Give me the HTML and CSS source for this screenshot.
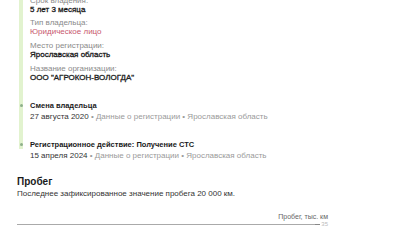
FILE: index.html
```html
<!DOCTYPE html>
<html lang="ru">
  <head>
    <meta charset="UTF-8" />
    <meta name="viewport" content="width=device-width, initial-scale=1.0" />
    <title>История владения</title>
    <link rel="stylesheet" href="styles.css">
  </head>
  <body>
    <main>
      <div class="timeline">
        <div class="owner">
          <div class="field">
            <div class="label">Срок владения:</div>
            <div class="value">5 лет 3 месяца</div>
          </div>
          <div class="field">
            <div class="label">Тип владельца:</div>
            <div class="value value-red">Юридическое лицо</div>
          </div>
          <div class="field">
            <div class="label">Место регистрации:</div>
            <div class="value">Ярославская область</div>
          </div>
          <div class="field">
            <div class="label">Название организации:</div>
            <div class="value">ООО "АГРОКОН-ВОЛОГДА"</div>
          </div>
        </div>

        <div class="event">
          <span class="dot"></span>
          <div class="event-title">Смена владельца</div>
          <div class="event-meta">27 августа 2020 <span class="muted">&bull; Данные о регистрации &bull; Ярославская область</span></div>
        </div>

        <div class="event">
          <span class="dot"></span>
          <div class="event-title">Регистрационное действие: Получение СТС</div>
          <div class="event-meta">15 апреля 2024 <span class="muted">&bull; Данные о регистрации &bull; Ярославская область</span></div>
        </div>
      </div>

      <section class="mileage">
        <h2>Пробег</h2>
        <p>Последнее зафиксированное значение пробега 20&nbsp;000&nbsp;км.</p>
        <div class="chart">
          <div class="chart-caption">Пробег, тыс. км</div>
          <div class="chart-row">
            <div class="chart-axis"></div>
            <span class="tick">35</span>
          </div>
        </div>
      </section>
    </main>
  </body>
</html>
```

FILE: styles.css
```css
* {
  box-sizing: border-box;
}

body {
  font-family: "Liberation Sans", Arial, sans-serif;
  margin: 0;
  padding: 0;
  background-color: #fff;
  color: #222;
  font-size: 8px;
  overflow: hidden;
}

main {
  padding: 0 17px;
  margin-top: -4px;
}

.timeline {
  position: relative;
  padding-left: 12px;
  margin-left: 1px;
}

.timeline::before {
  content: "";
  position: absolute;
  left: 1px;
  top: 0;
  height: 153px;
  width: 4px;
  background-color: #e2f3cf;
}

.field {
  margin-bottom: 5px;
  line-height: 9px;
}

.field:first-child {
  margin-bottom: 4px;
}

.label {
  color: #8a8a8a;
}

.value {
  color: #1a1a1a;
  -webkit-text-stroke: 0.3px #1a1a1a;
}

.value-red {
  color: #c8586e;
  -webkit-text-stroke: 0;
}

.owner {
  padding-bottom: 14px;
}

.event {
  position: relative;
  margin-bottom: 18px;
}

.event:last-child {
  margin-bottom: 0;
}

.dot {
  position: absolute;
  left: -10px;
  top: 3px;
  width: 3px;
  height: 3px;
  border-radius: 50%;
  background-color: #8eb08a;
}

.event-title {
  font-size: 7.5px;
  font-weight: bold;
  line-height: 10px;
  color: #1a1a1a;
}

.event-meta {
  margin-top: 1px;
  line-height: 10px;
  color: #333;
}

.muted {
  color: #9a9a9a;
}

.mileage h2 {
  font-size: 10px;
  margin: 15px 0 1px;
  line-height: 12px;
  color: #1a1a1a;
}

.mileage p {
  margin: 0;
  line-height: 10px;
  color: #333;
}

.chart {
  padding-top: 13px;
  width: 311px;
}

.chart-caption {
  text-align: right;
  font-size: 7px;
  line-height: 9px;
  color: #666;
}

.chart-row {
  display: flex;
  align-items: center;
  height: 6px;
}

.chart-axis {
  flex: 1;
  height: 1px;
  background-color: #aaa;
}

.tick {
  position: relative;
  font-size: 6px;
  line-height: 6px;
  color: #bbb;
  padding-left: 6px;
}

.tick::before {
  content: "";
  position: absolute;
  left: 0;
  top: 3px;
  width: 5px;
  height: 1px;
  background-color: #888;
}
```
